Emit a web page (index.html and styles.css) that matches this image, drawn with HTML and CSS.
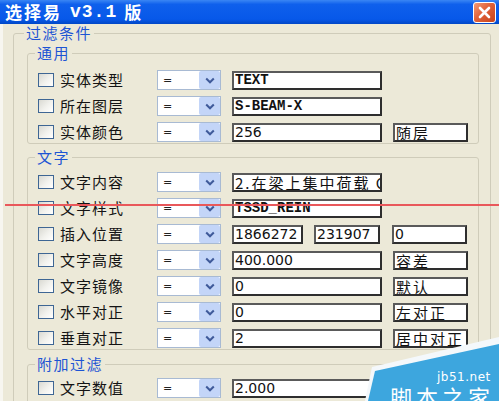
FILE: index.html
```html
<!DOCTYPE html>
<html lang="zh">
<head>
<meta charset="utf-8">
<title>选择易 v3.1 版</title>
<link rel="stylesheet" href="styles.css">
</head>
<body>
<div class="titlebar">
  <div class="title"><span class="tcjk">选择易</span><span class="ver">v3.1</span><span class="tcjk">版</span></div>
  <div class="close"><svg width="13" height="13" viewBox="0 0 13 13"><path d="M2 2 L11 11 M11 2 L2 11" stroke="#fff" stroke-width="2.6" stroke-linecap="round"/></svg></div>
</div>
<div class="client">
  <fieldset class="group outer">
    <legend>过滤条件</legend>

    <fieldset class="group inner g-general">
      <legend>通用</legend>
      <div class="rows">
        <div class="row">
          <span class="chk"></span><span class="lbl">实体类型</span>
          <span class="combo"><span class="eq">=</span><span class="btn"><svg width="10" height="7" viewBox="0 0 10 7"><polyline points="1.2,1.5 5,5.3 8.8,1.5" fill="none" stroke="#3F5A9A" stroke-width="2"/></svg></span></span>
          <span class="field w150 mono">TEXT</span>
        </div>
        <div class="row">
          <span class="chk"></span><span class="lbl">所在图层</span>
          <span class="combo"><span class="eq">=</span><span class="btn"><svg width="10" height="7" viewBox="0 0 10 7"><polyline points="1.2,1.5 5,5.3 8.8,1.5" fill="none" stroke="#3F5A9A" stroke-width="2"/></svg></span></span>
          <span class="field w150 mono">S-BEAM-X</span>
        </div>
        <div class="row">
          <span class="chk"></span><span class="lbl">实体颜色</span>
          <span class="combo"><span class="eq">=</span><span class="btn"><svg width="10" height="7" viewBox="0 0 10 7"><polyline points="1.2,1.5 5,5.3 8.8,1.5" fill="none" stroke="#3F5A9A" stroke-width="2"/></svg></span></span>
          <span class="field w150 num">256</span>
          <span class="field w75 zh">随层</span>
        </div>
      </div>
    </fieldset>

    <fieldset class="group inner g-text">
      <legend>文字</legend>
      <div class="rows">
        <div class="row">
          <span class="chk"></span><span class="lbl">文字内容</span>
          <span class="combo"><span class="eq">=</span><span class="btn"><svg width="10" height="7" viewBox="0 0 10 7"><polyline points="1.2,1.5 5,5.3 8.8,1.5" fill="none" stroke="#3F5A9A" stroke-width="2"/></svg></span></span>
          <span class="field w150 zh">2.在梁上集中荷载 G</span>
        </div>
        <div class="row">
          <span class="chk"></span><span class="lbl">文字样式</span>
          <span class="combo"><span class="eq">=</span><span class="btn"><svg width="10" height="7" viewBox="0 0 10 7"><polyline points="1.2,1.5 5,5.3 8.8,1.5" fill="none" stroke="#3F5A9A" stroke-width="2"/></svg></span></span>
          <span class="field w150 mono">TSSD_REIN</span>
        </div>
        <div class="row">
          <span class="chk"></span><span class="lbl">插入位置</span>
          <span class="combo"><span class="eq">=</span><span class="btn"><svg width="10" height="7" viewBox="0 0 10 7"><polyline points="1.2,1.5 5,5.3 8.8,1.5" fill="none" stroke="#3F5A9A" stroke-width="2"/></svg></span></span>
          <span class="field w71 num">1866272</span>
          <span class="field w66 num gap12">231907</span>
          <span class="field w75 num">0</span>
        </div>
        <div class="row">
          <span class="chk"></span><span class="lbl">文字高度</span>
          <span class="combo"><span class="eq">=</span><span class="btn"><svg width="10" height="7" viewBox="0 0 10 7"><polyline points="1.2,1.5 5,5.3 8.8,1.5" fill="none" stroke="#3F5A9A" stroke-width="2"/></svg></span></span>
          <span class="field w150 num">400.000</span>
          <span class="field w75 zh">容差</span>
        </div>
        <div class="row">
          <span class="chk"></span><span class="lbl">文字镜像</span>
          <span class="combo"><span class="eq">=</span><span class="btn"><svg width="10" height="7" viewBox="0 0 10 7"><polyline points="1.2,1.5 5,5.3 8.8,1.5" fill="none" stroke="#3F5A9A" stroke-width="2"/></svg></span></span>
          <span class="field w150 num">0</span>
          <span class="field w75 zh">默认</span>
        </div>
        <div class="row">
          <span class="chk"></span><span class="lbl">水平对正</span>
          <span class="combo"><span class="eq">=</span><span class="btn"><svg width="10" height="7" viewBox="0 0 10 7"><polyline points="1.2,1.5 5,5.3 8.8,1.5" fill="none" stroke="#3F5A9A" stroke-width="2"/></svg></span></span>
          <span class="field w150 num">0</span>
          <span class="field w75 zh">左对正</span>
        </div>
        <div class="row">
          <span class="chk"></span><span class="lbl">垂直对正</span>
          <span class="combo"><span class="eq">=</span><span class="btn"><svg width="10" height="7" viewBox="0 0 10 7"><polyline points="1.2,1.5 5,5.3 8.8,1.5" fill="none" stroke="#3F5A9A" stroke-width="2"/></svg></span></span>
          <span class="field w150 num">2</span>
          <span class="field w75 zh">居中对正</span>
        </div>
      </div>
    </fieldset>

    <fieldset class="group inner g-extra">
      <legend>附加过滤</legend>
      <div class="rows">
        <div class="row">
          <span class="chk"></span><span class="lbl">文字数值</span>
          <span class="combo"><span class="eq">=</span><span class="btn"><svg width="10" height="7" viewBox="0 0 10 7"><polyline points="1.2,1.5 5,5.3 8.8,1.5" fill="none" stroke="#3F5A9A" stroke-width="2"/></svg></span></span>
          <span class="field w150 num">2.000</span>
        </div>
      </div>
    </fieldset>
  </fieldset>
</div>

<div class="redline"></div>

<div class="watermark">
  <svg class="wm-shape" width="140" height="65" viewBox="0 0 140 65">
    <polygon points="6,65 13,31 140,1 140,65" fill="#F4F8FB"/>
    <polygon points="9,65 16,35 140,8 140,65" fill="#3DA6DE"/>
  </svg>
  <span class="wm-url">jb51.net</span>
  <span class="wm-name">脚本之家</span>
</div>
</body>
</html>
```

FILE: styles.css
```css
* { box-sizing: border-box; }
html, body { margin: 0; padding: 0; }
body {
  width: 499px;
  height: 401px;
  overflow: hidden;
  position: relative;
  background: #ECE9D8;
  font-family: "Noto Sans CJK SC", "Noto Sans", sans-serif;
  color: #111;
}

/* title bar */
.titlebar {
  height: 24px;
  display: flex;
  align-items: center;
  justify-content: space-between;
  padding: 0 3px 0 5px;
  background: linear-gradient(to bottom, #3A86F4 0%, #0F60EC 18%, #0758E9 80%, #0047C6 100%);
}
.title {
  display: flex;
  align-items: center;
  color: #fff;
  font-weight: 700;
  font-size: 17px;
  line-height: 20px;
  white-space: nowrap;
}
.tcjk { letter-spacing: 2px; }
.ver {
  font-family: "Liberation Mono", monospace;
  font-size: 18px;
  margin: 0 7px 0 8px;
  letter-spacing: 1px;
}
.close {
  width: 23px;
  height: 21px;
  border: 1px solid #fff;
  border-radius: 3px;
  background: linear-gradient(135deg, #F39A76 0%, #E0623A 45%, #C7421B 100%);
  display: flex;
  align-items: center;
  justify-content: center;
}

/* client area */
.client {
  border-left: 3px solid #F7F6F0;
  height: 377px;
  padding-top: 1px;
}

.group {
  margin: 0;
  border: 1px solid #CFCCBA;
  border-radius: 3px;
  min-inline-size: 0;
}
.group > legend {
  color: #1D55D4;
  font-size: 15px;
  line-height: 16px;
  letter-spacing: 1.5px;
  padding: 0 2px;
  margin-left: -3px;
}
.outer {
  margin-left: 10px;
  width: 478px;
  padding: 4px 11px 0 13px;
}
.inner {
  width: 452px;
  padding: 0 0 1px 10px;
}
.g-general { padding-top: 9px; }
.g-text { margin-top: 5px; padding-top: 7px; }
.g-extra { margin-top: 6px; padding-top: 6px; padding-bottom: 10px; }

.rows {
  display: flex;
  flex-direction: column;
  gap: 6px;
}
.row {
  display: flex;
  align-items: center;
  height: 20px;
}
.chk {
  flex: none;
  width: 16px;
  height: 14px;
  border: 1px solid #3E6694;
  background: linear-gradient(135deg, #D9D9D2 0%, #F2F2EE 55%, #FFFFFF 100%);
  margin-right: 6px;
}
.lbl {
  flex: none;
  width: 97px;
  font-size: 15px;
  letter-spacing: 1px;
  line-height: 20px;
  color: #141414;
}
.combo {
  flex: none;
  width: 64px;
  height: 20px;
  margin-right: 11px;
  border: 1px solid #A8BAD3;
  background: #fff;
  display: flex;
  align-items: center;
  justify-content: space-between;
  padding: 0 0 0 5px;
}
.eq {
  font-family: "DejaVu Sans", sans-serif;
  font-size: 11px;
  color: #222;
}
.btn {
  width: 21px;
  height: 18px;
  background: #C3D5F8;
  border-radius: 2px;
  display: flex;
  align-items: center;
  justify-content: center;
}
.field {
  flex: none;
  height: 19px;
  margin-right: 11px;
  border: 2px solid #3a3a3a;
  border-color: #5a5a5a #2e2e2e #2e2e2e #5a5a5a;
  background: #fff;
  padding-left: 1px;
  white-space: nowrap;
  overflow: hidden;
  display: flex;
  align-items: center;
  color: #111;
}
.gap12 { margin-right: 12px; }
.w150 { width: 150px; }
.w75 { width: 75px; }
.w71 { width: 71px; }
.w66 { width: 66px; }
.mono {
  font-family: "Liberation Mono", monospace;
  font-weight: 700;
  font-size: 14px;
}
.num {
  font-family: "DejaVu Sans", sans-serif;
  font-size: 14px;
}
.zh {
  font-family: "Noto Sans CJK SC", sans-serif;
  font-size: 15px;
  letter-spacing: 2px;
}

/* red annotation line over the dialog */
.redline {
  position: absolute;
  left: 5px;
  right: 0;
  top: 204px;
  height: 2px;
  background: #E9585B;
}

/* watermark */
.watermark {
  position: absolute;
  left: 359px;
  top: 336px;
  width: 140px;
  height: 65px;
  overflow: hidden;
}
.wm-shape { position: absolute; left: 0; top: 0; }
.wm-url {
  position: absolute;
  left: 78px;
  top: 35px;
  color: #fff;
  font-family: "DejaVu Sans", sans-serif;
  font-size: 12px;
  line-height: 13px;
  letter-spacing: 0.5px;
}
.wm-name {
  position: absolute;
  left: 31px;
  top: 49px;
  color: #fff;
  font-size: 22px;
  line-height: 22px;
  letter-spacing: 4px;
  white-space: nowrap;
}
```
